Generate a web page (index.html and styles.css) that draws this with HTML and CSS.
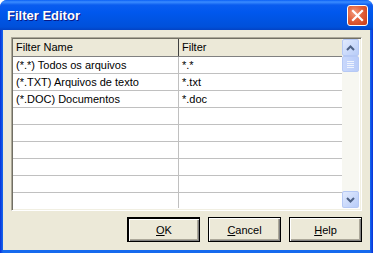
FILE: index.html
```html
<!DOCTYPE html>
<html>
<head>
<meta charset="utf-8">
<link rel="stylesheet" href="styles.css">
</head>
<body>
<div class="window">
  <div class="titlebar">
    <span class="title">Filter Editor</span>
    <div class="close">
      <svg width="13" height="13" viewBox="0 0 13 13"><path d="M2 2 L11 11 M11 2 L2 11" stroke="#fff" stroke-width="2.2" stroke-linecap="square"/></svg>
    </div>
  </div>
  <div class="client">
    <div class="grid">
      <div class="table">
        <div class="row head"><div class="c1">Filter Name</div><div class="c2">Filter</div></div>
        <div class="row"><div class="c1">(*.*) Todos os arquivos</div><div class="c2">*.*</div></div>
        <div class="row"><div class="c1">(*.TXT) Arquivos de texto</div><div class="c2">*.txt</div></div>
        <div class="row"><div class="c1">(*.DOC) Documentos</div><div class="c2">*.doc</div></div>
        <div class="row"><div class="c1"></div><div class="c2"></div></div>
        <div class="row"><div class="c1"></div><div class="c2"></div></div>
        <div class="row"><div class="c1"></div><div class="c2"></div></div>
        <div class="row"><div class="c1"></div><div class="c2"></div></div>
        <div class="row"><div class="c1"></div><div class="c2"></div></div>
        <div class="row"><div class="c1"></div><div class="c2"></div></div>
        <div class="row"><div class="c1"></div><div class="c2"></div></div>
      </div>
      <div class="scroll">
        <div class="sbtn"><svg width="9" height="6" viewBox="0 0 9 6"><path d="M1 5 L4.5 1.5 L8 5" fill="none" stroke="#4D6185" stroke-width="2"/></svg></div>
        <div class="thumb"><svg width="7" height="7" viewBox="0 0 7 7"><path d="M0 0.5H7M0 2.5H7M0 4.5H7M0 6.5H7" stroke="#EEF3FE" stroke-width="1"/></svg></div>
        <div class="track"></div>
        <div class="sbtn"><svg width="9" height="6" viewBox="0 0 9 6"><path d="M1 1 L4.5 4.5 L8 1" fill="none" stroke="#4D6185" stroke-width="2"/></svg></div>
      </div>
    </div>
    <div class="buttons">
      <div class="btn"><u>O</u>K</div>
      <div class="btn"><u>C</u>ancel</div>
      <div class="btn"><u>H</u>elp</div>
    </div>
  </div>
</div>
</body>
</html>
```
FILE: styles.css
```css
html, body { margin: 0; padding: 0; background: #fff; }
.window {
  width: 373px; height: 253px; box-sizing: border-box;
  background: linear-gradient(to right, #0831D9 0, #166AEE 3px, #166AEE 370px, #0831D9 373px);
  display: flex; flex-direction: column;
  border-radius: 7px 7px 0 0;
  overflow: hidden;
  font-family: "Liberation Sans", Arial, sans-serif;
}
.titlebar {
  height: 30px; flex: none;
  background: linear-gradient(to bottom, #0A5FF5 0, #3B8CFF 2px, #0A5CEF 5px, #0058EE 12px, #0053E0 22px, #0050DA 27px, #0343C4 30px);
  display: flex; align-items: center; justify-content: space-between;
  padding: 0 5px 0 7px;
}
.title {
  color: #fff; font-family: "Liberation Sans", Arial, sans-serif; font-weight: bold; font-size: 13px;
  text-shadow: 1px 1px 0 #0A1883; margin-top: 1px;
}
.close {
  width: 19px; height: 19px; border: 1px solid #fff; border-radius: 3px;
  background: radial-gradient(circle at 35% 35%, #F39C7E 0, #E2603A 45%, #CB3A14 100%);
  display: flex; align-items: center; justify-content: center; margin-top: 1px;
}
.client {
  flex: 1; background: #ECE9D8; margin: 0 3px 3px 3px;
  padding: 7px 8px 0 8px;
  display: flex; flex-direction: column;
}
.grid {
  height: 174px; box-sizing: border-box;
  border-top: 1px solid #ACA899; border-left: 1px solid #ACA899;
  border-right: 1px solid #fff; border-bottom: 1px solid #fff;
  box-shadow: inset 1px 1px 0 #716F64, inset -1px -1px 0 #F1EFE2;
  padding: 1px 2px 2px 1px;
  display: flex; background: #fff;
}
.table { flex: 1; overflow: hidden; }
.row { display: flex; height: 16px; border-bottom: 1px solid #C0C0C0; }
.row.head { height: 17px; background: #ECE9D8; border-bottom: 1px solid #808080; }
.row div {
  font-size: 11px; line-height: 16px; color: #000; padding-left: 3px;
  white-space: nowrap; overflow: hidden; box-sizing: border-box;
}
.row.head div { line-height: 17px; }
.c1 { width: 166px; border-right: 1px solid #C0C0C0; }
.c2 { flex: 1; }
.head .c1 { border-right: 1px solid #404040; }
.scroll {
  width: 17px; flex: none; display: flex; flex-direction: column;
  background: #F4F3EE;
}
.sbtn {
  height: 17px; box-sizing: border-box;
  border: 1px solid #B6C9F5; border-radius: 2px;
  background: linear-gradient(135deg, #E1EAFE, #B8CCF8);
  display: flex; align-items: center; justify-content: center;
}
.thumb {
  height: 16px; box-sizing: border-box; border: 1px solid #B6C9F5; border-radius: 2px;
  background: linear-gradient(to right, #C9D8FC, #B9CCF9);
  display: flex; align-items: center; justify-content: center;
}
.track { flex: 1; background: #F7F7F1; }
.buttons {
  display: flex; justify-content: flex-end; gap: 8px; margin-top: 6px;
}
.btn {
  width: 73px; height: 25px; box-sizing: border-box;
  border: 1px solid #000; background: #ECE9D8;
  box-shadow: inset 1px 1px 0 #fff, inset -1px -1px 0 #808080, inset -2px -2px 0 #ACA899;
  font-size: 11px; display: flex; align-items: center; justify-content: center; color: #000;
}
.btn:first-child { border-width: 2px 1px 1px 2px; }
```
